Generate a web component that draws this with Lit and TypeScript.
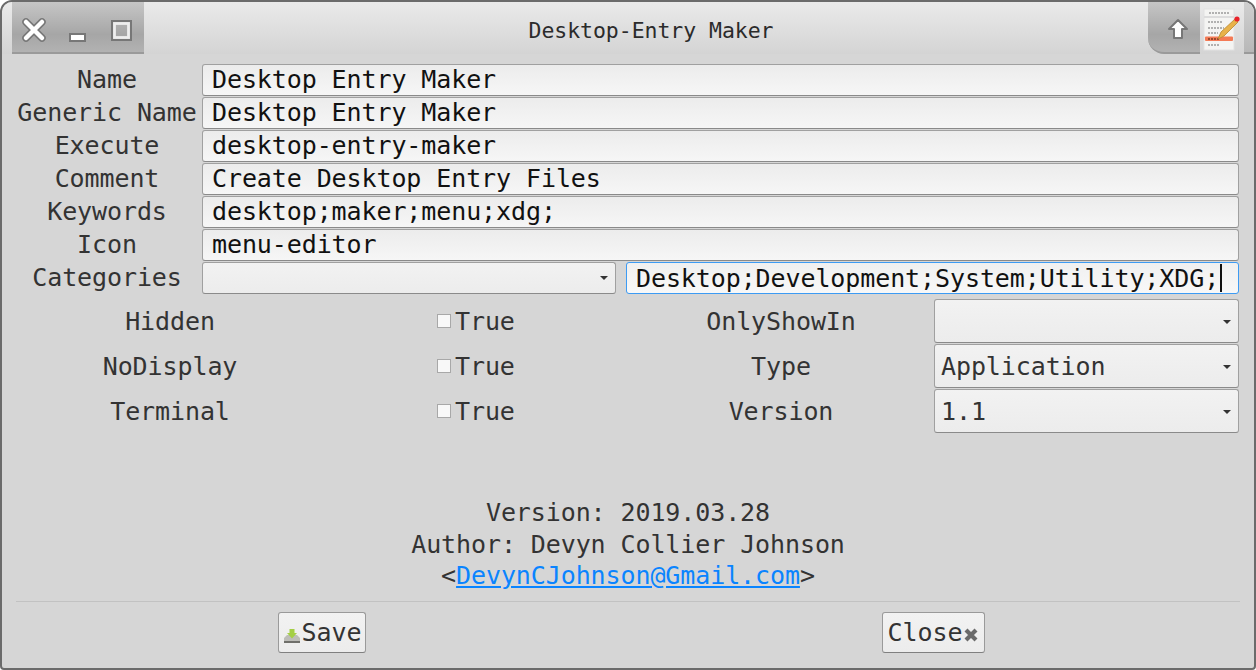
import { css, html, LitElement } from 'lit';
import { customElement } from 'lit/decorators.js';

const textRows = [
  ['Name', 'Desktop Entry Maker'],
  ['Generic Name', 'Desktop Entry Maker'],
  ['Execute', 'desktop-entry-maker'],
  ['Comment', 'Create Desktop Entry Files'],
  ['Keywords', 'desktop;maker;menu;xdg;'],
  ['Icon', 'menu-editor'],
];

const optionRows = [
  ['Hidden', 'OnlyShowIn', ''],
  ['NoDisplay', 'Type', 'Application'],
  ['Terminal', 'Version', '1.1'],
];

@customElement('app-root')
export class AppRoot extends LitElement {
  static override styles = css`
    :host {
      display: block;
      width: 1256px;
      height: 670px;
      background: #fff;
      font-family: 'DejaVu Sans Mono', monospace;
      font-size: 25px;
      letter-spacing: -0.1px;
      color: #333;
    }
    .window {
      box-sizing: border-box;
      width: 1256px;
      height: 670px;
      display: flex;
      flex-direction: column;
      border: 2px solid #6b6b6b;
      border-radius: 12px 12px 4px 4px;
      background: #d6d6d6;
      overflow: hidden;
    }
    .titlebar {
      flex: none;
      height: 52px;
      display: flex;
      box-sizing: border-box;
      padding-left: 10px;
      background: linear-gradient(#eaeaea, #d4d4d4);
    }
    .win-left {
      width: 132px;
      height: 52px;
      box-sizing: border-box;
      border-bottom: 2px solid #9a9a9a;
      background: linear-gradient(#c6c6c6, #a6a6a6 65%, #b2b2b2);
      display: flex;
      align-items: center;
    }
    .win-left svg { display: block; flex: none; }
    .title {
      flex: 1;
      text-align: center;
      font-size: 21.5px;
      letter-spacing: -0.05px;
      line-height: 57px;
      color: #2b2b2b;
      padding-left: 10px;
    }
    .win-right {
      width: 52px;
      height: 52px;
      box-sizing: border-box;
      border-bottom: 2px solid #9a9a9a;
      border-radius: 0 0 0 16px;
      background: linear-gradient(#c6c6c6, #a6a6a6 65%, #b2b2b2);
      display: flex;
      align-items: center;
      justify-content: center;
      padding: 4px 0 0 8px;
    }
    .app-icon {
      width: 44px;
      height: 52px;
      display: flex;
      align-items: flex-start;
    }
    .win-end {
      width: 10px;
      height: 52px;
      box-sizing: border-box;
      border-bottom: 2px solid #9a9a9a;
      background: linear-gradient(#cfcfcf, #b8b8b8);
    }
    .form {
      display: flex;
      flex-direction: column;
      gap: 1px;
      padding: 10px 15px 0 14px;
    }
    .row {
      display: grid;
      grid-template-columns: 182px 1fr;
      column-gap: 4px;
      height: 32px;
      align-items: center;
    }
    .label { text-align: center; white-space: nowrap; line-height: 30px; }
    .field, .combo {
      box-sizing: border-box;
      height: 32px;
      border: 1px solid #a0a0a0;
      border-bottom-color: #8a8a8a;
      border-radius: 3px;
      background: linear-gradient(#ececec, #f6f6f6);
      color: #111;
      padding-left: 9px;
      line-height: 29px;
      white-space: nowrap;
      overflow: hidden;
    }
    .pair {
      display: grid;
      grid-template-columns: 414px 1fr;
      column-gap: 10px;
    }
    .combo {
      display: flex;
      align-items: center;
      justify-content: space-between;
      padding: 0 7px 0 6px;
      background: linear-gradient(#f2f2f2, #ececec);
      color: #333;
    }
    .caret-down {
      flex: none;
      width: 0;
      height: 0;
      border-left: 4.5px solid transparent;
      border-right: 4.5px solid transparent;
      border-top: 4.5px solid #333;
    }
    .focused {
      border-color: #3d9bf3;
      background: linear-gradient(#f0f0f0, #f8f8f8);
      display: flex;
      align-items: center;
    }
    .cursor {
      display: block;
      flex: none;
      width: 2px;
      height: 28px;
      margin-left: 1px;
      background: #111;
    }
    .options {
      display: flex;
      flex-direction: column;
      gap: 1px;
      padding: 5px 15px 0 14px;
    }
    .option {
      display: grid;
      grid-template-columns: 308px 304px 306px 305px;
      height: 44px;
      align-items: center;
    }
    .option .combo { height: 44px; padding-top: 1px; }
    .check {
      display: flex;
      align-items: center;
      gap: 4px;
      padding-left: 113px;
    }
    .box {
      box-sizing: border-box;
      width: 14px;
      height: 14px;
      border: 1px solid #a8a8a8;
      background: #f8f8f8;
      flex: none;
    }
    .opt-label { text-align: center; }
    .info {
      margin-top: 64px;
      text-align: center;
      line-height: 31.5px;
    }
    .info a {
      color: #0a84ff;
      text-decoration: underline;
    }
    .rule {
      height: 1px;
      margin: 9px 14px 0;
      background: #c2c2c2;
    }
    .buttons {
      height: 41px;
      margin-top: 10px;
      display: grid;
      grid-template-columns: 276px 88px 516px 103px;
    }
    .btn {
      box-sizing: border-box;
      height: 41px;
      border: 1px solid #9a9a9a;
      border-bottom-color: #808080;
      border-radius: 3px;
      background: linear-gradient(#f2f2f2, #ececec);
      display: flex;
      align-items: center;
      justify-content: center;
      gap: 1px;
      white-space: nowrap;
    }
    .btn svg { flex: none; margin-top: 6px; }
    .save { grid-column: 2; }
    .close { grid-column: 4; }
  `;

  private renderCombo(value: string) {
    return html`<div class="combo">
      <span>${value}</span><span class="caret-down"></span>
    </div>`;
  }

  override render() {
    return html`
      <div class="window">
        <div class="titlebar">
          <div class="win-left">
            <svg width="44" height="50" viewBox="0 0 44 50">
              <path d="M14 20 L30 36 M30 20 L14 36" stroke="#777" stroke-width="7.5" stroke-linecap="round"/>
              <path d="M14 20 L30 36 M30 20 L14 36" stroke="#fff" stroke-width="4.5" stroke-linecap="round"/>
            </svg>
            <svg width="40" height="50" viewBox="0 0 40 50">
              <rect x="14" y="32" width="15" height="7" fill="#fff" stroke="#777" stroke-width="2"/>
            </svg>
            <svg width="44" height="50" viewBox="0 0 44 50">
              <rect x="16" y="19" width="19" height="19" fill="none" stroke="#777" stroke-width="2"/>
              <rect x="18.5" y="21.5" width="14" height="14" fill="none" stroke="#eee" stroke-width="2.8"/>
            </svg>
          </div>
          <div class="title">Desktop-Entry Maker</div>
          <div class="win-right">
            <svg width="24" height="24" viewBox="0 0 24 24">
              <path d="M12 3 L21 12 L16 12 L16 21 L8 21 L8 12 L3 12 Z" fill="#fff" stroke="#777" stroke-width="2" stroke-linejoin="round"/>
            </svg>
          </div>
          <div class="app-icon">
            <svg width="44" height="52" viewBox="0 0 44 52">
              <rect x="4" y="7" width="30" height="41" fill="#f4f4f2" stroke="#e2e2e2"/>
              <path d="M9 11 H29" stroke="#9a9a9a" stroke-width="1.4" stroke-dasharray="2 1"/>
              <rect x="4" y="14" width="30" height="2" fill="#dcdcdc"/>
              <path d="M8 20 H22 M8 26 H24 M8 31 H18 M8 43 H20" stroke="#9a9a9a" stroke-width="1.4" stroke-dasharray="2 1"/>
              <rect x="5" y="34.5" width="28" height="4.5" rx="1" fill="#f47a55"/>
              <path d="M8 37 H20" stroke="#7a3a20" stroke-width="1.4" stroke-dasharray="2 1"/>
              <path d="M18 37 L21 30 L35 17 L38 20 L24 34 Z" fill="#e8b24a" stroke="#b8862e" stroke-width="0.8"/>
              <circle cx="37" cy="17" r="2.6" fill="#e8222a"/>
            </svg>
          </div>
          <div class="win-end"></div>
        </div>

        <div class="form">
          ${textRows.map(
            ([label, value]) => html`<div class="row">
              <div class="label">${label}</div>
              <div class="field">${value}</div>
            </div>`
          )}
          <div class="row">
            <div class="label">Categories</div>
            <div class="pair">
              ${this.renderCombo('')}
              <div class="field focused">
                <span>Desktop;Development;System;Utility;XDG;</span><span class="cursor"></span>
              </div>
            </div>
          </div>
        </div>

        <div class="options">
          ${optionRows.map(
            ([left, right, value]) => html`<div class="option">
              <div class="opt-label">${left}</div>
              <div class="check"><span class="box"></span><span>True</span></div>
              <div class="opt-label">${right}</div>
              ${this.renderCombo(value)}
            </div>`
          )}
        </div>

        <div class="info">
          <div>Version: 2019.03.28</div>
          <div>Author: Devyn Collier Johnson</div>
          <div>&lt;<a href="#">DevynCJohnson@Gmail.com</a>&gt;</div>
        </div>

        <div class="rule"></div>

        <div class="buttons">
          <div class="btn save">
            <svg width="18" height="20" viewBox="0 0 18 20">
              <path d="M1 13 L4 10 H14 L17 13 V18 H1 Z" fill="#bdbdb8"/>
              <rect x="1" y="16" width="16" height="2" fill="#6f6f6a"/>
              <path d="M6.5 4 H11.5 V8 H14 L9 13.5 L4 8 H6.5 Z" fill="#a4cf45"/>
            </svg>
            <span>Save</span>
          </div>
          <div class="btn close">
            <span>Close</span>
            <svg width="16" height="16" viewBox="0 0 16 16">
              <path d="M3 3 L13 13 M13 3 L3 13" stroke="#6a6a6a" stroke-width="4.2"/>
            </svg>
          </div>
        </div>
      </div>
    `;
  }
}
